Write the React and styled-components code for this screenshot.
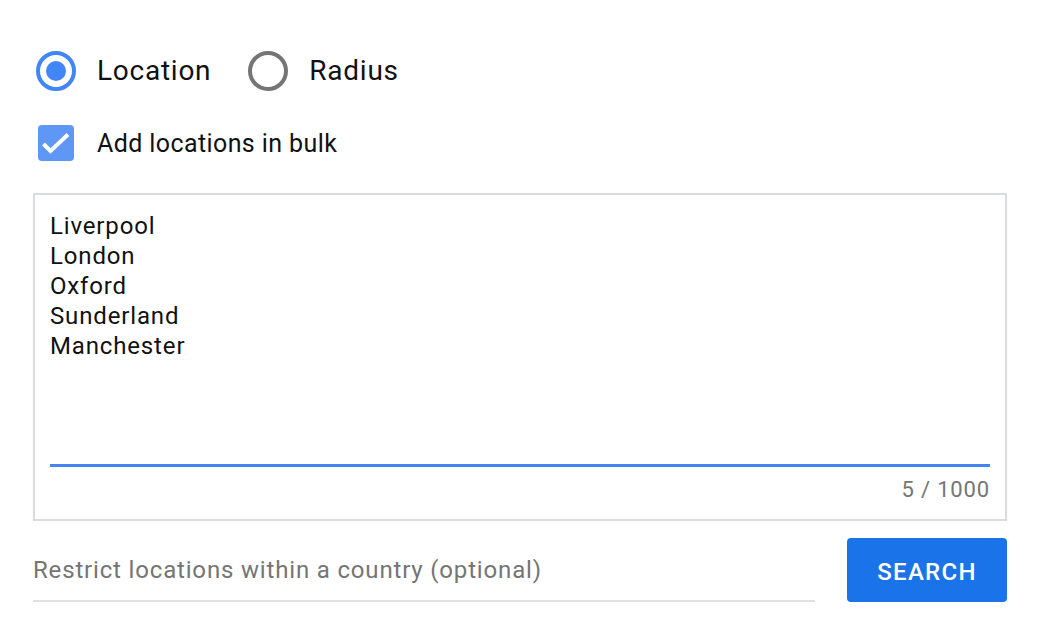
import React from "react";
import styled, { createGlobalStyle } from "styled-components";

const Global = createGlobalStyle`
  html, body { margin: 0; padding: 0; background: #fff; }
  body { font-family: Roboto, "Liberation Sans", Arial, sans-serif; color: #111; }
  * { box-sizing: border-box; }
`;

const Page = styled.div`
  width: 1038px;
  padding: 51px 0 0 33px;
`;

const Form = styled.div`
  width: 974px;
  display: flex;
  flex-direction: column;
`;

const RadioRow = styled.div`
  display: flex;
  align-items: center;
  gap: 37px;
  height: 40px;
  padding-left: 3px;
`;

const RadioLabel = styled.label`
  display: flex;
  align-items: center;
  gap: 21px;
  font-size: 28px;
  letter-spacing: 0.75px;
  line-height: 40px;
  color: #111;
  cursor: pointer;
`;

const RadioCircle = styled.span`
  position: relative;
  width: 40px;
  height: 40px;
  border-radius: 50%;
  border: 4px solid ${(p) => (p.$checked ? "#4285f4" : "#757575")};
  flex: none;
  &::after {
    content: "";
    position: absolute;
    left: 6px;
    top: 6px;
    width: 20px;
    height: 20px;
    border-radius: 50%;
    background: #4285f4;
    display: ${(p) => (p.$checked ? "block" : "none")};
  }
`;

const CheckRow = styled.label`
  display: flex;
  align-items: center;
  gap: 23px;
  height: 36px;
  margin-top: 34px;
  padding-left: 5px;
  font-size: 25px;
  letter-spacing: 0.4px;
  color: #111;
`;

const CheckBox = styled.span`
  width: 36px;
  height: 36px;
  border-radius: 4px;
  background: #5e97f6;
  display: flex;
  flex: none;
`;

const Box = styled.div`
  margin-top: 32px;
  border: 2px solid #dadce0;
  padding: 16px 15px 16px;
  display: flex;
  flex-direction: column;
`;

const Lines = styled.div`
  height: 253px;
  font-size: 24px;
  letter-spacing: 0.85px;
  line-height: 30px;
  color: #111;
`;

const Underline = styled.div`
  height: 3px;
  background: #4285f4;
`;

const Counter = styled.div`
  margin-top: 10px;
  text-align: right;
  font-size: 22px;
  letter-spacing: 0.85px;
  line-height: 26px;
  color: #757575;
`;

const BottomRow = styled.div`
  margin-top: 17px;
  display: flex;
  align-items: flex-start;
  gap: 32px;
`;

const CountryInput = styled.input`
  width: 782px;
  height: 64px;
  padding: 1px 0 0 0;
  border: none;
  border-bottom: 2px solid #e0e0e0;
  font-family: Roboto, "Liberation Sans", Arial, sans-serif;
  font-size: 24px;
  letter-spacing: 0.83px;
  color: #111;
  outline: none;
  background: transparent;
  &::placeholder { color: #757575; opacity: 1; }
`;

const SearchButton = styled.button`
  width: 160px;
  height: 64px;
  padding: 3px 0 0;
  border: none;
  border-radius: 4px;
  background: #1a73e8;
  color: #fff;
  font-family: Roboto, "Liberation Sans", Arial, sans-serif;
  font-size: 24px;
  font-weight: 500;
  letter-spacing: 1.3px;
  cursor: pointer;
`;

const cities = ["Liverpool", "London", "Oxford", "Sunderland", "Manchester"];

export default function App() {
  return (
    <Page>
      <Global />
      <Form>
        <RadioRow>
          <RadioLabel>
            <RadioCircle $checked />
            Location
          </RadioLabel>
          <RadioLabel>
            <RadioCircle />
            Radius
          </RadioLabel>
        </RadioRow>
        <CheckRow>
          <CheckBox>
            <svg width="36" height="36" viewBox="0 0 36 36">
              <path d="M5.5 19L12.5 26L30 9.5" fill="none" stroke="#fff" strokeWidth="4" />
            </svg>
          </CheckBox>
          Add locations in bulk
        </CheckRow>
        <Box>
          <Lines>
            {cities.map((c) => (
              <div key={c}>{c}</div>
            ))}
          </Lines>
          <Underline />
          <Counter>5 / 1000</Counter>
        </Box>
        <BottomRow>
          <CountryInput placeholder="Restrict locations within a country (optional)" />
          <SearchButton>SEARCH</SearchButton>
        </BottomRow>
      </Form>
    </Page>
  );
}
